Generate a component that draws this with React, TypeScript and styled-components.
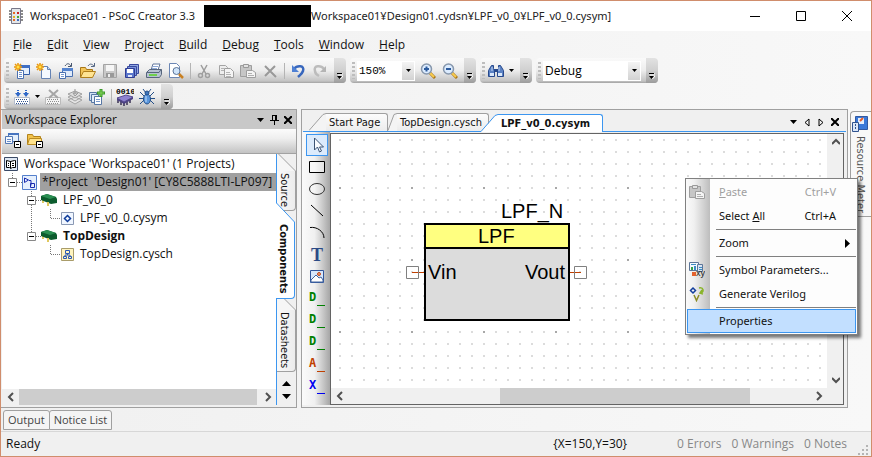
import React from "react";
import styled, { createGlobalStyle, css } from "styled-components";

const ui = '"Open Sans", "Noto Sans", sans-serif';
const compact = '11px/18px "Noto Sans", "Open Sans", sans-serif';
const tahoma = '"DejaVu Sans Condensed", "DejaVu Sans", sans-serif';
const blue = "#3c96f0";
const edge = "#a0a0a0";

const Global = createGlobalStyle`
  * { box-sizing: border-box; }
  body { margin: 0; overflow: hidden; font: 12px/18px ${ui}; color: #111; }
  button { border: 0; padding: 0; margin: 0; background: none; font: inherit; color: inherit; }
  svg { display: block; flex: none; }
  ul { list-style: none; margin: 0; padding: 0; }
  h1, h2 { font: inherit; margin: 0; }
`;

const Window = styled.div`
  position: relative;
  display: flex;
  flex-direction: column;
  min-height: 100vh;
  border: 1px solid #d08d6c;
  background: linear-gradient(90deg, #f0f0f0, #f8f8f8);
`;

/* ---------- title and menu ---------- */
const TitleBar = styled.header`
  display: flex;
  align-items: center;
  height: 30px;
  padding: 0 14px 0 7px;
  background: #fff;
  color: #222;
`;
const Title = styled.h1`
  display: flex;
  flex: 1;
  align-items: center;
  padding-left: 6px;
  white-space: pre;
  font: ${compact};
`;
const TitleName = styled.span`
  width: 174px;
`;
const Redaction = styled.span`
  width: 107px;
  height: 22px;
  background: #000;
`;
const Caption = styled.div`
  display: flex;
  gap: 26px;
`;
const CaptionButton = styled.button`
  display: grid;
  place-items: center;
  width: 20px;
  height: 20px;
`;
const MenuBar = styled.nav`
  display: flex;
  gap: 15px;
  height: 27px;
  padding: 4px 12px;
`;
const MenuButton = styled.button`
  line-height: 18px;
`;

/* ---------- tool bars ---------- */
const ToolArea = styled.div`
  display: flex;
  flex-wrap: wrap;
  gap: 0 4px;
  padding: 0 3px;
`;
const Break = styled.div`
  flex-basis: 100%;
  height: 1px;
`;
const Strip = styled.div`
  display: flex;
  align-items: center;
  height: 25px;
  padding-left: 2px;
  border-radius: 4px;
  background: linear-gradient(#fafafa, #ededed 50%, #c4c4c4 92%, #a2a2a2);
`;
const Grip = styled.span`
  width: 3px;
  height: 17px;
  margin-right: 2px;
  background: repeating-linear-gradient(#bdbdbd 0 2px, transparent 2px 4px);
`;
const ToolButton = styled.button<{ $w?: number }>`
  display: grid;
  place-items: center;
  width: ${(p) => p.$w ?? 22}px;
  height: 22px;
`;
const Divider = styled.span`
  width: 1px;
  height: 16px;
  margin: 0 2px 0 3px;
  background: #b4b4b4;
`;
const OverflowButton = styled.button`
  display: grid;
  place-items: end center;
  width: 12px;
  height: 25px;
  padding-bottom: 3px;
  margin-left: 3px;
  border-radius: 0 4px 4px 0;
  background: linear-gradient(#e2e2e2, #d0d0d0 50%, #9c9c9c);
`;
const Combo = styled.label<{ $w: number }>`
  display: grid;
  width: ${(p) => p.$w}px;
  height: 20px;
  margin-right: 2px;
  background: #fff;
`;
const Select = styled.select<{ $mono?: boolean }>`
  grid-area: 1 / 1;
  appearance: none;
  border: 0;
  padding: 0 14px 0 2px;
  background: transparent;
  color: #000;
  font: ${(p) => (p.$mono ? '11px "Liberation Mono", monospace' : `12px ${ui}`)};
`;
const ComboArrow = styled.span`
  grid-area: 1 / 1;
  justify-self: end;
  display: grid;
  place-items: center;
  width: 12px;
  margin: 1px;
  background: linear-gradient(#f4f4f4, #d2d2d2);
  pointer-events: none;
`;

/* ---------- work area ---------- */
const Work = styled.main`
  display: flex;
  flex: 1;
  min-height: 0;
  gap: 4px;
`;
const Explorer = styled.section`
  display: flex;
  flex-direction: column;
  width: 296px;
  border: solid ${edge};
  border-width: 1px 1px 1px 0;
  padding-left: 1px;
  background: #f0f0f0;
`;
const PanelTitle = styled.div`
  display: flex;
  align-items: center;
  height: 19px;
  padding: 0 1px 0 3px;
  background: #c8c8c8;
`;
const PanelName = styled.h2`
  flex: 1;
`;
const PanelButton = styled.button`
  display: grid;
  place-items: center;
  width: 14px;
  height: 18px;
`;
const PanelTools = styled.div`
  display: flex;
  height: 25px;
  background: linear-gradient(#fcfcfc, #eee 40%, #c3c3c3);
  border-bottom: 1px solid #a2a2a2;
`;
const ExplorerBody = styled.div`
  display: flex;
  flex: 1;
  padding-bottom: 2px;
`;
const TreePane = styled.div`
  display: flex;
  flex: 1;
  flex-direction: column;
  min-width: 0;
  background: #fff;
`;
const Tree = styled.ul`
  flex: 1;
  padding-top: 1px;
`;
const TreeRow = styled.li`
  display: flex;
  align-items: center;
  height: 18px;
  white-space: pre;
`;
const TreeLabel = styled.span<{ $bold?: boolean; $selected?: boolean }>`
  padding-left: 6px;
  font-weight: ${(p) => (p.$bold ? 700 : 400)};
  ${(p) =>
    p.$selected &&
    css`
      flex: 1;
      height: 18px;
      margin-left: 3px;
      padding-left: 2px;
      background: #a0a0a0;
    `}
`;
const Expander = styled.button`
  width: 9px;
  height: 18px;
`;

/* ---------- scroll bars ---------- */
const ScrollBar = styled.div<{ $vertical?: boolean }>`
  display: flex;
  flex-direction: ${(p) => (p.$vertical ? "column" : "row")};
  justify-content: space-between;
  align-items: stretch;
  ${(p) => (p.$vertical ? "width" : "height")}: 16px;
  background: #f0f0f0;
`;
const ScrollArrow = styled.button`
  display: grid;
  place-items: center;
  flex: none;
  width: 17px;
  height: 16px;
`;
const Track = styled.div<{ $start: number; $size: number }>`
  display: grid;
  grid-template-columns: ${(p) => p.$start}fr ${(p) => p.$size}fr ${(p) => 100 - p.$start - p.$size}fr;
  flex: 1;
`;
const Thumb = styled.div`
  grid-column: 2;
  background: #cdcdcd;
`;

/* ---------- vertical tabs ---------- */
const SideTabs = styled.div`
  display: flex;
  flex-direction: column;
  width: 20px;
  border-left: 1px solid ${blue};
`;
const SideTab = styled.button<{ $active?: boolean }>`
  position: relative;
  z-index: ${(p) => (p.$active ? 1 : 0)};
  display: flex;
  flex-direction: column;
  width: 19px;
  margin: ${(p) => (p.$active ? "-8px 0 0 -1px" : "0")};
  font: 11px/16px ${tahoma};
  font-weight: ${(p) => (p.$active ? 700 : 400)};
`;
const SideTabBody = styled.span<{ $active?: boolean; $h: number }>`
  width: 19px;
  height: ${(p) => p.$h}px;
  padding: 2px 3px 0 0;
  writing-mode: vertical-rl;
  line-height: 15px;
  text-align: left;
  border: solid ${(p) => (p.$active ? blue : edge)};
  border-width: 0 1px 1px 0;
  border-radius: 0 0 4px 0;
  background: ${(p) => (p.$active ? "#fff" : "linear-gradient(90deg, #fafafa, #ececec)")};
`;
const TabScroll = styled.div`
  display: flex;
  flex: 1;
  flex-direction: column;
  align-items: center;
  justify-content: flex-end;
  padding-bottom: 2px;
`;
const StepButton = styled.button`
  display: grid;
  place-items: center;
  width: 14px;
  height: 13px;
`;

/* ---------- documents ---------- */
const Documents = styled.section`
  display: flex;
  flex: 1;
  flex-direction: column;
  min-width: 0;
  border: 1px solid ${edge};
  background: #f0f0f0;
`;
const TabBar = styled.div`
  display: flex;
  align-items: flex-end;
  height: 22px;
  margin: 0 1px;
  padding: 0 4px 0 6px;
  border-bottom: 1px solid ${blue};
`;
const DocTab = styled.button<{ $active?: boolean; $w: number }>`
  position: relative;
  display: flex;
  width: ${(p) => p.$w}px;
  height: 18px;
  margin: ${(p) => (p.$active ? "0 0 -1px -8px" : "0")};
  font: 11px/17px ${tahoma};
  font-weight: ${(p) => (p.$active ? 700 : 400)};
  white-space: nowrap;
`;
const DocTabBody = styled.span<{ $active?: boolean }>`
  flex: 1;
  align-self: stretch;
  padding-left: 3px;
  text-align: left;
  border: solid ${(p) => (p.$active ? blue : edge)};
  border-width: 1px 1px 0 0;
  border-radius: 0 3px 0 0;
  background: ${(p) => (p.$active ? "#fff" : "linear-gradient(#fcfcfc, #ececec)")};
`;
const Spacer = styled.span`
  flex: 1;
`;
const Editor = styled.div`
  display: flex;
  flex: 1;
  padding: 0 3px 2px 0;
`;
const Toolbox = styled.div`
  display: flex;
  flex-direction: column;
  align-items: flex-end;
  width: 28px;
  padding: 2px 2px 0 0;
  background: linear-gradient(90deg, #fafafa, #f0f0f0 45%, #a6a6a6);
`;
const ToolboxButton = styled.button<{ $on?: boolean }>`
  display: grid;
  place-items: center;
  width: 22px;
  height: 22px;
  outline: ${(p) => (p.$on ? `1px solid ${blue}` : "0")};
  outline-offset: -1px;
  background: ${(p) => (p.$on ? "#dcebfc" : "none")};
`;
const CanvasFrame = styled.div`
  display: grid;
  grid-template: minmax(0, 1fr) 16px / minmax(0, 1fr) 16px;
  flex: 1;
  min-width: 0;
  margin-top: 1px;
  border: solid #646464;
  border-width: 1px;
  background: #f0f0f0;
`;
const Canvas = styled.svg`
  width: 100%;
  height: 100%;
  background: #fff;
  font: 20px "Liberation Sans", Arial, sans-serif;
`;

/* ---------- right rail ---------- */
const Rail = styled.aside`
  width: 19px;
  padding-top: 2px;
`;
const RailTab = styled.button`
  display: flex;
  flex-direction: column;
  align-items: center;
  gap: 4px;
  width: 21px;
  margin-left: -2px;
  height: 106px;
  padding: 4px 3px 0 0;
  border: solid ${edge};
  border-width: 1px 0 1px 1px;
  border-radius: 4px 0 0 4px;
  font: 11px/16px ${tahoma};
  color: #555;
`;
const Vertical = styled.span`
  writing-mode: vertical-rl;
  white-space: nowrap;
`;

/* ---------- bottom ---------- */
const BottomTabs = styled.div`
  display: flex;
  height: 23px;
  padding: 2px 2px 0;
`;
const BottomTab = styled.button`
  height: 20px;
  padding: 0 4px;
  margin-right: -1px;
  border: 1px solid ${edge};
  border-radius: 3px 3px 0 0;
  background: #f4f4f4;
  color: #444;
  font: 11px/18px ${ui};
`;
const StatusBar = styled.footer`
  display: flex;
  align-items: center;
  height: 25px;
  padding-left: 5px;
  border-top: 1px solid #d7d7d7;
  background: #f0f0f0;
`;
const StatusCount = styled.span`
  margin-right: 10px;
  color: #888;
`;
const Position = styled.span`
  margin-right: 50px;
`;

/* ---------- context menu ---------- */
const ContextMenu = styled.div`
  position: absolute;
  z-index: 5;
  top: 177px;
  right: 13px;
  width: 173px;
  padding: 1px;
  border: 1px solid #808080;
  background: linear-gradient(90deg, #fafafa, #f0f0f0 8px, #bdbdbd 24px, #fdfdfd 24px);
  box-shadow: 3px 3px 3px #0008;
  font: ${compact};
`;
const ContextItem = styled.button<{ $selected?: boolean; $disabled?: boolean; $submenu?: boolean }>`
  display: flex;
  align-items: center;
  width: 100%;
  height: 24px;
  padding: 0 ${(p) => (p.$submenu ? 6 : 20)}px 0 2px;
  color: ${(p) => (p.$disabled ? "#a0a0a0" : "#111")};
  ${(p) =>
    p.$selected &&
    css`
      background: #c2dfff;
      box-shadow: inset 0 0 0 1px ${blue};
    `}
`;
const IconSlot = styled.span`
  flex: none;
  width: 30px;
`;
const ItemLabel = styled.span`
  flex: 1;
  text-align: left;
  white-space: nowrap;
`;
const Separator = styled.hr`
  height: 1px;
  margin: 1px 0 1px 29px;
  border: 0;
  background: #808080;
`;

/* ---------- icons ---------- */
const Svg = ({ w = 16, h = 16, children }: { w?: number; h?: number; children?: React.ReactNode }) => (
  <svg width={w} height={h} viewBox={`0 0 ${w} ${h}`} fill="none" aria-hidden="true">
    {children}
  </svg>
);
const Down = ({ color = "#000" }: { color?: string }) => (
  <Svg w={7} h={4}><path d="M0 0h7L3.5 4z" fill={color} /></Svg>
);
const SmallDown = () => (
  <Svg w={5} h={3}><path d="M0 0h5L2.500 3z" fill="#000" /></Svg>
);
const More = () => (
  <Svg w={6} h={7}><path d="M1 1h5M1 3h5l-2.500 3z" stroke="#fff" /><path d="M0 0h5v1H0zM0 3h5L2.500 6z" fill="#000" /></Svg>
);
const Star = () => (
  <g>
    <path d="M4 0v8M0 4h8M1 1l6 6M7 1L1 7" stroke="#e8960c" strokeWidth="1.500" />
    <circle cx="4" cy="4" r="2" fill="#ffe04a" stroke="#f0a010" />
  </g>
);
const NewProject = () => (
  <Svg>
    <path d="M5.500 3.500h10v8h-10z" fill="#e4effc" stroke="#2f5aa8" /><path d="M5 2h11v3H5z" fill="#3f6fc4" />
    <path d="M3.500 7.500h6v8h-6z" fill="#fff" stroke="#4a70b0" /><path d="M5 9.500h3M5 11.500h3M5 13.500h3" stroke="#6f92cc" /><Star />
  </Svg>
);
const NewFile = () => (
  <Svg><path d="M5.500 3.500h6l3 3v9h-9z" fill="#f4f9ff" stroke="#6583b4" /><path d="M11.500 3.500v3h3" fill="#c7daf4" stroke="#6583b4" /><Star /></Svg>
);
const AddItem = () => (
  <Svg>
    <path d="M4.500 6.500h10v7h-10z" fill="#dfeafa" stroke="#4a70b0" /><path d="M4 5h11v3H4z" fill="#5584cf" />
    <path d="M1.500 9.500h6v6h-6z" fill="#fff" stroke="#4a70b0" /><path d="M3 11.500h3M3 13.500h3" stroke="#7899ce" />
    <path d="M7 3c2-3 4-3 6 0M13.500 0v3.500H10" stroke="#47566e" />
  </Svg>
);
const Open = () => (
  <Svg>
    <path d="M.5 14V4.500h5l1 2h6V9" fill="#f4c659" stroke="#a87718" /><path d="M.5 14.500l3-6h12l-3 6z" fill="#ffe493" stroke="#b07f1d" />
    <path d="M8 3c2-3 4-2 6 0M14.500 0v3.500H11" stroke="#566886" />
  </Svg>
);
const Save = () => (
  <Svg><path d="M1.500 1.500h13v13h-13z" fill="#c9c9c9" stroke="#a4a4a4" /><path d="M4 2h8v6H4z" fill="#f6f6f6" /><path d="M4 10h8v4H4z" fill="#999" /><path d="M6 11h2v3H6z" fill="#eee" /></Svg>
);
const SaveAll = () => (
  <Svg>
    <path d="M5.500 1.500h9v9h-9z" fill="#8fa6e0" stroke="#39489e" /><path d="M3.500 3.500h9v9h-9z" fill="#7894dc" stroke="#39489e" />
    <path d="M1.500 5.500h9v9h-9z" fill="#5a76cc" stroke="#303c92" /><path d="M3 6h6v4H3z" fill="#fff" /><path d="M4 12h4v2H4z" fill="#dfe6fa" />
  </Svg>
);
const Print = () => (
  <Svg>
    <path d="M5 7l2-6h7l-2 6z" fill="#fff" stroke="#61769c" /><path d="M7 3.500h5M6 5.500h5" stroke="#8da8d8" />
    <path d="M.5 9.500l3-3h12v5l-2 3H.5z" fill="#b7c2d2" stroke="#56657c" /><path d="M1 9.500h12l2-3" stroke="#56657c" /><path d="M3 11h8v2H3z" fill="#6fd04c" />
  </Svg>
);
const Preview = () => (
  <Svg><path d="M1.500.5h7l3 3v11h-10z" fill="#fff" stroke="#6b86b4" /><circle cx="8.500" cy="8" r="3.500" fill="#cfe4fa" stroke="#5c7497" /><path d="M11 11l4 4" stroke="#c98022" strokeWidth="2.500" /></Svg>
);
const Cut = () => (
  <Svg><path d="M5 2l5 9M11 2L6 11" stroke="#9c9c9c" strokeWidth="1.500" /><circle cx="4.500" cy="12.500" r="2" stroke="#a0a0a0" strokeWidth="1.500" /><circle cx="11.500" cy="12.500" r="2" stroke="#a0a0a0" strokeWidth="1.500" /></Svg>
);
const Copy = () => (
  <Svg><path d="M1.500 2.500h6l2 2v7h-8z" fill="#eee" stroke="#a4a4a4" /><path d="M6.500 5.500h6l3 3v6h-9z" fill="#f4f4f4" stroke="#a0a0a0" /><path d="M3 5.500h3M3 7.500h3M8 9.500h4M8 11.500h5M8 13.500h5" stroke="#b4b4b4" /></Svg>
);
const Paste = () => (
  <Svg><path d="M.5 2.500h11v11H.5z" fill="#c6c6c6" stroke="#9e9e9e" /><path d="M3.500 1.500h5v3h-5z" fill="#e2e2e2" stroke="#999" /><path d="M6.500 7.500h6l3 2v5h-9z" fill="#f4f4f4" stroke="#9e9e9e" /><path d="M8 10.500h4M8 12.500h6" stroke="#b0b0b0" /></Svg>
);
const Delete = () => (<Svg><path d="M3 3l11 11M13 3L3 13" stroke="#999" strokeWidth="2" /></Svg>);
const Undo = () => (
  <Svg><path d="M4 6c3-4 11-4 9 2-1 3-3 4-5 6" stroke="#3867bd" strokeWidth="2.500" /><path d="M2 2v7h7z" fill="#4e80d4" /></Svg>
);
const Redo = () => (
  <Svg><path d="M12 6C9 2 1 2 3 8c0 2 2 4 4 5" stroke="#bcbcbc" strokeWidth="2.500" /><path d="M14 3v6H8z" fill="#b4b4b4" /></Svg>
);
const Magnifier = ({ plus }: { plus?: boolean }) => (
  <Svg>
    <path d="M10 10l5 5" stroke="#a87418" strokeWidth="3" /><path d="M10 10l4 4" stroke="#f8cc50" strokeWidth="2" />
    <circle cx="6.500" cy="6" r="5" fill="#dcecff" stroke="#8797ac" strokeWidth="1.500" />
    <path d={plus ? "M4 6h5M6.500 3.500v5" : "M4 6h5"} stroke="#2c5b9e" strokeWidth="2" />
  </Svg>
);
const Binoculars = () => (
  <Svg>
    <path d="M3.500 2.500h2v3l1 2v6h-6v-6zM10.500 2.500h2l3 5v6h-6v-6l1-2z" fill="#5b82c4" stroke="#27498c" />
    <path d="M6 6h4v3H6z" fill="#27498c" /><path d="M2 10h4v3H2zM10 10h4v3h-4z" fill="#dbe9fb" /><path d="M4 4v4M11 4v4" stroke="#c3d6f4" />
  </Svg>
);
const Build = () => (
  <Svg>
    <path d="M4 1v5M12 1v5" stroke="#2e67c8" strokeWidth="2" strokeDasharray="1 1" /><path d="M1 4h6L4 8zM9 4h6l-3 4z" fill="#2e67c8" />
    <path d="M.5 8.500h15v7H.5z" fill="#fff" stroke="#b4bccb" /><path d="M2 10.500h12M3 12.500h11M2 14.500h12" stroke="#2f5290" strokeDasharray="1 1" />
  </Svg>
);
const CleanBuild = () => (
  <Svg><path d="M.5 8.500h15v7H.5z" fill="#f4f4f4" stroke="#bbb" /><path d="M2 10.500h12M3 12.500h11M2 14.500h12" stroke="#8e8e8e" strokeDasharray="1 1" /><path d="M4 1l9 8M13 1L4 9" stroke="#a6a6a6" strokeWidth="2" /></Svg>
);
const Generate = () => (
  <Svg><path d="M1 11l7-3 7 3-7 4zM1 8l7-3 7 3-7 4z" fill="#e4e4e4" stroke="#a4a4a4" /><path d="M1 5l7-3 7 3-7 4z" fill="#ddd" stroke="#a0a0a0" /><path d="M8 0v5M6 4h5l-3 3z" stroke="#999" /></Svg>
);
const Pages = () => (
  <Svg>
    <path d="M.5 3.500h7v8h-7z" fill="#d2e1f4" stroke="#5777a4" /><path d="M2.500 5.500h7v8h-7z" fill="#e3edf9" stroke="#5777a4" /><path d="M5.500 7.500h7v8h-7z" fill="#fff" stroke="#5777a4" />
    <path d="M7 10.500h4M7 12.500h4" stroke="#7899ce" /><path d="M12 0v8M8 4h8" stroke="#3d9a2c" strokeWidth="3" /><path d="M12 1v6M9 4h6" stroke="#86d458" />
  </Svg>
);
const Program = () => (
  <Svg w={18} h={18}>
    <path d="M2 11v4M5 13v4M8 14v4M11 14v3M14 12v3" stroke="#383052" strokeWidth="1.500" />
    <path d="M1 10l9-3 7 2-9 5z" fill="#8e82d0" stroke="#5a4f94" /><path d="M1 10l7 4v2l-7-4zM8 14l9-5v2l-9 5z" fill="#4c4284" />
    <text x="0" y="6" fontSize="8" fontWeight="700" fontFamily="Liberation Mono, monospace" fill="#000">0010</text>
  </Svg>
);
const Bug = () => (
  <Svg>
    <path d="M4 0l3 4M12 0L9 4M1 3l4 4M15 3l-4 4M0 9.500h16M1 15l4-4M15 15l-4-4" stroke="#244f88" />
    <ellipse cx="8" cy="10" rx="3.500" ry="5" fill="#5a96dc" stroke="#244f88" /><circle cx="8" cy="4" r="2" fill="#3d75bd" stroke="#244f88" /><path d="M7 7v6" stroke="#c4e0fc" />
  </Svg>
);
const Chip = () => (
  <Svg><path d="M3.500.5h9v15h-9z" fill="#e2e6ea" stroke="#778" /><path d="M1 3h2M1 6h2M1 9h2M1 12h2M13 3h2M13 6h2M13 9h2M13 12h2" stroke="#666" strokeWidth="1.500" /><path d="M5 4h2v2H5zM5 11h2v2H5z" fill="#e46a24" /><path d="M9 4h2v2H9z" fill="#c22" /><path d="M5 8h2v2H5z" fill="#e8b020" /><path d="M9 8h2v2H9z" fill="#49a63a" /><path d="M9 11h2v2H9z" fill="#3b69c0" /></Svg>
);
const CollapseBox = () => (<g><path d="M9.500 9.500h6v6h-6z" fill="#fff" stroke="#000" /><path d="M11 12.500h3" stroke="#000" /></g>);
const CollapseAll = () => (
  <Svg><path d="M3.500 1.500h10v8h-10z" fill="#e4effc" stroke="#5478b4" /><path d="M3 1h11v2H3z" fill="#4674c0" /><path d="M.5 4.500h7v7h-7z" fill="#f4f8fe" stroke="#5478b4" /><path d="M2 7.500h4M2 9.500h4" stroke="#6a8cc8" /><CollapseBox /></Svg>
);
const CollapseFolder = () => (
  <Svg><path d="M.5 12V2.500h5l1 2h7V12z" fill="#f2c34c" stroke="#b2821b" /><path d="M.5 12.500l2-6h12v6z" fill="#ffe38c" stroke="#b98a22" /><CollapseBox /></Svg>
);
const Book = () => (
  <Svg w={14} h={14}><path d="M.5.5h13v13H.5z" fill="#dfe8f4" stroke="#3a4a66" /><path d="M2.500 3.500l4 1 4-1h1v7h-3l-2 1-1-1h-3z" fill="#fff" stroke="#000" /><path d="M6.500 4v7M4 6.500h1M4 8.500h1M8 6.500h2M8 8.500h2" stroke="#000" /></Svg>
);
const ProjectIcon = () => (
  <Svg w={15} h={15}><path d="M.5.5h14v14H.5z" fill="#e6f0fd" stroke="#5580cc" /><path d="M2.500 3l4 2-4 2.500zM7 5.500h2v5M8.500 8.500h4v4h-4z" stroke="#1a2cb0" /></Svg>
);
const Component = () => (
  <Svg w={16} h={14}>
    <path d="M2 6v4M7 8v5" stroke="#e0c860" strokeWidth="2" />
    <path d="M0 3l6-2 9 3 1 2v4l-6 1-10-4z" fill="#0d5c2e" /><path d="M0 3l6-2 9 3-6 2z" fill="#2a8f52" /><path d="M2 8v2M7 9v3" stroke="#e0c860" strokeWidth="2" />
  </Svg>
);
const SymbolFile = () => (
  <Svg w={13} h={13}><path d="M.5.5h12v12H.5z" fill="#f0f6ff" stroke="#8a99b4" /><path d="M6.500 3.500l3 3-3 3-3-3z" stroke="#0c3a9a" strokeWidth="1.500" /></Svg>
);
const SchematicFile = () => (
  <Svg w={13} h={13}><path d="M.5.5h12v12H.5z" fill="#fff4be" stroke="#a99c6a" /><path d="M4.500 2.500h4v3h-4zM2.500 8.500h3v2h-3zM7.500 8.500h3v2h-3zM6.500 6v1M4 8V7h5v1" stroke="#2b59b4" /></Svg>
);
const Pin = () => (<Svg w={9} h={10}><path d="M2.500 0v5M6.500 0v5M2 .5h5M0 5.500h9M4.500 6v4" stroke="#000" /><path d="M5 0h1v5H5z" fill="#000" /></Svg>);
const Cross = () => (<Svg w={8} h={8}><path d="M0 0l8 8M8 0L0 8" stroke="#000" strokeWidth="2" /></Svg>);
const chevrons = { left: "M6 1L2 5l4 4", right: "M2 1l4 4-4 4", up: "M0 7l4-4 4 4", down: "M0 3l4 4 4-4" };
const Chevron = ({ to }: { to: keyof typeof chevrons }) => (
  <Svg w={8} h={10}><path d={chevrons[to]} stroke="#505050" strokeWidth="2" /></Svg>
);
const Meter = () => (
  <Svg><path d="M3.500.5h12v13h-12z" fill="#3a78d8" stroke="#3158a0" /><path d="M6 2h6v6H6z" fill="#e4eefb" /><path d="M8 5l3-3" stroke="#e65c28" strokeWidth="2" /><path d="M.5 6.500h6v9h-6z" fill="#dbe7f8" stroke="#31548f" /><path d="M3 9h1M3 12h1" stroke="#31548f" strokeWidth="2" /></Svg>
);
const SymbolParams = () => (
  <Svg><path d="M.5.5h9v8h-9z" fill="#f4f8fd" stroke="#5c7598" /><path d="M8.500 2.500h5v7h-5z" fill="#d9e4f2" stroke="#5c7598" /><path d="M2 2.500h5M10 5.500h3M10 7.500h3" stroke="#3b8cc4" /><path d="M2 5h2v3H2z" fill="#35a046" /><path d="M5 4h2v4H5z" fill="#3b8cc4" /><path d="M3 10h4v4H3z" fill="#e46330" /><text x="7" y="14" fontSize="9" fontFamily="Liberation Sans, sans-serif" fill="#222">xy</text></Svg>
);
const Verilog = () => (
  <Svg><path d="M4 2l2.500 2.500L4 7 1.500 4.500z" stroke="#123e9c" strokeWidth="1.500" /><path d="M10 2c5-1 5 4 2 5M13 4l-2 3 3 1" stroke="#8ab42a" strokeWidth="1.500" /><path d="M5 9l2.500 5.500L10 9" stroke="#8c8c22" strokeWidth="1.500" /></Svg>
);

const Pointer = () => (<Svg w={18} h={18}><path d="M6.500 2v12l3-3 2 5 2-1-2-4h4z" fill="#f8fbff" stroke="#3c5474" /></Svg>);
const RectTool = () => (<Svg w={18} h={18}><path d="M1.500 3.500h15v11h-15z" fill="#fff8" stroke="#000" /></Svg>);
const EllipseTool = () => (<Svg w={18} h={18}><ellipse cx="9" cy="9" rx="7.500" ry="5.500" fill="#fff4" stroke="#333" /></Svg>);
const LineTool = () => (<Svg w={18} h={18}><path d="M3 3l12 11" stroke="#000" /></Svg>);
const ArcTool = () => (<Svg w={18} h={18}><path d="M2 3.500c7-1 14 4 14 10.500" stroke="#000" /></Svg>);
const TextTool = () => (<Svg w={22} h={22}><text x="11" y="17" textAnchor="middle" fontSize="18" fontWeight="700" fontFamily="Liberation Serif, serif" fill="#2b4a86">T</text></Svg>);
const ImageTool = () => (<Svg w={18} h={18}><path d="M2.500 2.500h13v12h-13z" fill="#d7e7fb" stroke="#31569c" /><path d="M3 14v-2l5-5 3 3 2-1 2 3v2z" fill="#fff" stroke="#42659f" /><circle cx="11" cy="6" r="1.500" fill="#f0a070" stroke="#c04820" /></Svg>);
const Terminal = ({ letter, color }: { letter: string; color: string }) => (
  <Svg w={18} h={18}><text x="1" y="11" fontSize="12" fontWeight="700" fontFamily="DejaVu Sans Mono, monospace" fill={color}>{letter}</text><path d="M9 15.500h8" stroke={color} /></Svg>
);

/* ---------- pieces ---------- */
const mnemonic = (text: string, at = 0) => (
  <>{text.slice(0, at)}<u>{text[at]}</u>{text.slice(at + 1)}</>
);
const Tool = ({ name, children, w }: { name: string; children: React.ReactNode; w?: number }) => (
  <ToolButton type="button" aria-label={name} title={name} $w={w}>{children}</ToolButton>
);
const Overflow = () => (<OverflowButton type="button" aria-label="Toolbar options"><More /></OverflowButton>);

const HScroll = ({ start, size }: { start: number; size: number }) => (
  <ScrollBar>
    <ScrollArrow type="button" aria-label="Scroll left"><Chevron to="left" /></ScrollArrow>
    <Track $start={start} $size={size}><Thumb /></Track>
    <ScrollArrow type="button" aria-label="Scroll right"><Chevron to="right" /></ScrollArrow>
  </ScrollBar>
);
const Toggle = ({ up, down, name }: { up?: boolean; down?: boolean; name: string }) => (
  <Expander type="button" aria-label={`Collapse ${name}`}>
    <Svg w={9} h={18}>
      {up && <path d="M4.500 0v5" stroke="#777" strokeDasharray="1 1" />}
      {down && <path d="M4.500 14v4" stroke="#777" strokeDasharray="1 1" />}
      <path d="M.5 5.500h8v8h-8z" fill="#fff" stroke="#888" /><path d="M2 9.500h5" stroke="#000" />
    </Svg>
  </Expander>
);
const Guide = ({ w, d }: { w: number; d?: string }) => (
  <Svg w={w} h={18}>{d && <path d={d} stroke="#777" strokeDasharray="1 1" />}</Svg>
);
const VTab = ({ label, h, active, slant = 17 }: { label: string; h: number; active?: boolean; slant?: number }) => (
  <SideTab type="button" $active={active}>
    <Svg w={19} h={slant}>
      <path d={`M${active ? 0.5 : 18.5 - slant} 0L18.500 ${slant}H0V0z`} fill={active ? "#fff" : "#f6f6f6"} />
      <path d={`M${active ? 0.5 : 18.5 - slant} 0L18.500 ${slant}`} stroke={active ? blue : edge} />
    </Svg>
    <SideTabBody $active={active} $h={h}>{label}</SideTabBody>
  </SideTab>
);
const DTab = ({ label, w, active, slant = 18 }: { label: string; w: number; active?: boolean; slant?: number }) => (
  <DocTab type="button" $active={active} $w={w}>
    <Svg w={slant} h={18}>
      <path d={`M0 17.500L${slant - 2} 1.500L${slant} .5V18H0z`} fill={active ? "#fff" : "#f4f4f4"} />
      <path d={`M0 17.500L${slant - 3} 1.500L${slant} .5`} stroke={active ? blue : edge} />
    </Svg>
    <DocTabBody $active={active}>{label}</DocTabBody>
  </DocTab>
);

const menus = ["File", "Edit", "View", "Project", "Build", "Debug", "Tools", "Window", "Help"];

const Drawing = () => (
  <Canvas role="img" aria-label="Low pass filter symbol">
    <defs>
      <pattern id="grid" x="8" y="5" width="12" height="12" patternUnits="userSpaceOnUse"><rect width="2" height="2" fill="#dcdcdc" /></pattern>
      <pattern id="major" x="8" y="53" width="72" height="72" patternUnits="userSpaceOnUse"><rect width="2" height="2" fill="#a8a8a8" /></pattern>
    </defs>
    <rect width="100%" height="100%" fill="url(#grid)" />
    <rect width="100%" height="100%" fill="url(#major)" />
    <g stroke="#000" strokeWidth="2">
      <rect x="94" y="90" width="144" height="96" fill="#dcdcdc" />
      <rect x="94" y="90" width="144" height="24" fill="#ffff80" />
    </g>
    <path d="M81 138.500h12M239 138.500h11" stroke="#c04000" />
    <path d="M75.500 132.500h12v12h-12zM243.500 132.500h12v12h-12z" fill="none" stroke="#808080" />
    <text x="170" y="84">LPF_N</text>
    <text x="147" y="109">LPF</text>
    <text x="97" y="145">Vin</text>
    <text x="234" y="145" textAnchor="end">Vout</text>
  </Canvas>
);

export default function App() {
  return (
    <Window>
      <Global />
      <TitleBar>
        <Chip />
        <Title><TitleName>Workspace01 - PSoC Creator 3.3</TitleName><Redaction />Workspace01¥Design01.cydsn¥LPF_v0_0¥LPF_v0_0.cysym]</Title>
        <Caption>
          <CaptionButton type="button" aria-label="Minimize"><Svg w={10} h={10}><path d="M0 5.500h10" stroke="#000" /></Svg></CaptionButton>
          <CaptionButton type="button" aria-label="Maximize"><Svg w={10} h={10}><path d="M.5.5h9v9h-9z" stroke="#000" /></Svg></CaptionButton>
          <CaptionButton type="button" aria-label="Close"><Svg w={10} h={10}><path d="M0 0l10 10M10 0L0 10" stroke="#000" /></Svg></CaptionButton>
        </Caption>
      </TitleBar>
      <MenuBar>
        {menus.map((m) => <MenuButton type="button" key={m}>{mnemonic(m)}</MenuButton>)}
      </MenuBar>

      <ToolArea>
        <Strip>
          <Grip />
          <Tool name="New project"><NewProject /></Tool>
          <Tool name="New file"><NewFile /></Tool>
          <Tool name="Add item"><AddItem /></Tool>
          <Tool name="Open"><Open /></Tool>
          <Tool name="Save"><Save /></Tool>
          <Tool name="Save all"><SaveAll /></Tool>
          <Tool name="Print"><Print /></Tool>
          <Tool name="Print preview"><Preview /></Tool>
          <Divider />
          <Tool name="Cut"><Cut /></Tool>
          <Tool name="Copy"><Copy /></Tool>
          <Tool name="Paste"><Paste /></Tool>
          <Tool name="Delete"><Delete /></Tool>
          <Divider />
          <Tool name="Undo"><Undo /></Tool>
          <Tool name="Redo"><Redo /></Tool>
          <Overflow />
        </Strip>
        <Strip>
          <Grip />
          <Combo $w={58}>
            <Select $mono aria-label="Zoom level"><option>150%</option></Select>
            <ComboArrow><SmallDown /></ComboArrow>
          </Combo>
          <Tool name="Zoom in"><Magnifier plus /></Tool>
          <Tool name="Zoom out"><Magnifier /></Tool>
          <Overflow />
        </Strip>
        <Strip>
          <Grip />
          <Tool name="Find" w={18}><Binoculars /></Tool>
          <Tool name="Find options" w={12}><SmallDown /></Tool>
          <Overflow />
        </Strip>
        <Strip>
          <Grip />
          <Combo $w={98}>
            <Select aria-label="Configuration"><option>Debug</option></Select>
            <ComboArrow><SmallDown /></ComboArrow>
          </Combo>
          <Overflow />
        </Strip>
        <Break />
        <Strip>
          <Grip />
          <Tool name="Build"><Build /></Tool>
          <Tool name="Build options" w={9}><SmallDown /></Tool>
          <Tool name="Clean"><CleanBuild /></Tool>
          <Tool name="Generate application"><Generate /></Tool>
          <Tool name="Add component"><Pages /></Tool>
          <Divider />
          <Tool name="Program"><Program /></Tool>
          <Tool name="Debug"><Bug /></Tool>
          <Overflow />
        </Strip>
      </ToolArea>

      <Work>
        <Explorer>
          <PanelTitle>
            <PanelName>Workspace Explorer</PanelName>
            <PanelButton type="button" aria-label="Window position"><Down /></PanelButton>
            <PanelButton type="button" aria-label="Auto hide"><Pin /></PanelButton>
            <PanelButton type="button" aria-label="Close panel"><Cross /></PanelButton>
          </PanelTitle>
          <PanelTools>
            <Tool name="Collapse projects"><CollapseAll /></Tool>
            <Tool name="Collapse folders"><CollapseFolder /></Tool>
          </PanelTools>
          <ExplorerBody>
            <TreePane>
              <Tree>
                <TreeRow><Guide w={2} /><Book /><TreeLabel>Workspace 'Workspace01' (1 Projects)</TreeLabel></TreeRow>
                <TreeRow><Guide w={6} /><Toggle up name="Design01" /><Guide w={5} d="M0 9.500h5" /><ProjectIcon /><TreeLabel $selected>*Project  'Design01' [CY8C5888LTI-LP097]</TreeLabel></TreeRow>
                <TreeRow><Guide w={25} /><Toggle up down name="LPF_v0_0" /><Guide w={5} d="M0 9.500h5" /><Component /><TreeLabel>LPF_v0_0</TreeLabel></TreeRow>
                <TreeRow><Guide w={59} d="M29.500 0v18M48.500 0v9.500h10" /><SymbolFile /><TreeLabel>LPF_v0_0.cysym</TreeLabel></TreeRow>
                <TreeRow><Guide w={25} /><Toggle up name="TopDesign" /><Guide w={5} d="M0 9.500h5" /><Component /><TreeLabel $bold>TopDesign</TreeLabel></TreeRow>
                <TreeRow><Guide w={59} d="M48.500 0v9.500h10" /><SchematicFile /><TreeLabel>TopDesign.cysch</TreeLabel></TreeRow>
              </Tree>
              <HScroll start={0} size={99} />
            </TreePane>
            <SideTabs>
              <VTab label="Source" h={40} />
              <VTab label="Components" h={77} active slant={19} />
              <VTab label="Datasheets" h={62} slant={11} />
              <TabScroll>
                <StepButton type="button" aria-label="Previous tab"><Svg w={9} h={5}><path d="M0 5l4.500-5L9 5z" fill="#000" /></Svg></StepButton>
                <StepButton type="button" aria-label="Next tab"><Svg w={9} h={5}><path d="M0 0h9L4.500 5z" fill="#000" /></Svg></StepButton>
              </TabScroll>
            </SideTabs>
          </ExplorerBody>
        </Explorer>

        <Documents>
          <TabBar>
            <DTab label="Start Page" w={79} slant={17} />
            <DTab label="TopDesign.cysch" w={101} slant={9} />
            <DTab label="LPF_v0_0.cysym" w={122} active slant={17} />
            <Spacer />
            <PanelButton type="button" aria-label="Open documents"><Down /></PanelButton>
            <PanelButton type="button" aria-label="Previous document"><Svg w={6} h={9}><path d="M5 1v7L1 4.500z" stroke="#000" /></Svg></PanelButton>
            <PanelButton type="button" aria-label="Next document"><Svg w={6} h={9}><path d="M1 1v7l4-3.500z" stroke="#000" /></Svg></PanelButton>
            <PanelButton type="button" aria-label="Close document"><Cross /></PanelButton>
          </TabBar>
          <Editor>
            <Toolbox>
              <ToolboxButton type="button" aria-label="Select" $on><Pointer /></ToolboxButton>
              <ToolboxButton type="button" aria-label="Rectangle"><RectTool /></ToolboxButton>
              <ToolboxButton type="button" aria-label="Ellipse"><EllipseTool /></ToolboxButton>
              <ToolboxButton type="button" aria-label="Line"><LineTool /></ToolboxButton>
              <ToolboxButton type="button" aria-label="Arc"><ArcTool /></ToolboxButton>
              <ToolboxButton type="button" aria-label="Text"><TextTool /></ToolboxButton>
              <ToolboxButton type="button" aria-label="Image"><ImageTool /></ToolboxButton>
              <ToolboxButton type="button" aria-label="Digital input"><Terminal letter="D" color="#008000" /></ToolboxButton>
              <ToolboxButton type="button" aria-label="Digital output"><Terminal letter="D" color="#008000" /></ToolboxButton>
              <ToolboxButton type="button" aria-label="Digital inout"><Terminal letter="D" color="#008000" /></ToolboxButton>
              <ToolboxButton type="button" aria-label="Analog terminal"><Terminal letter="A" color="#c04000" /></ToolboxButton>
              <ToolboxButton type="button" aria-label="External terminal"><Terminal letter="X" color="#0000f0" /></ToolboxButton>
            </Toolbox>
            <CanvasFrame>
              <Drawing />
              <ScrollBar $vertical>
                <ScrollArrow type="button" aria-label="Scroll up"><Chevron to="up" /></ScrollArrow>
                <ScrollArrow type="button" aria-label="Scroll down"><Chevron to="down" /></ScrollArrow>
              </ScrollBar>
              <HScroll start={33} size={54} />
            </CanvasFrame>
          </Editor>
        </Documents>

        <Rail>
          <RailTab type="button"><Meter /><Vertical>Resource Meter</Vertical></RailTab>
        </Rail>
      </Work>

      <BottomTabs>
        <BottomTab type="button">Output</BottomTab>
        <BottomTab type="button">Notice List</BottomTab>
      </BottomTabs>
      <StatusBar>
        <span>Ready</span>
        <Spacer />
        <Position>{"{X=150,Y=30}"}</Position>
        <StatusCount>0 Errors</StatusCount>
        <StatusCount>0 Warnings</StatusCount>
        <StatusCount>0 Notes</StatusCount>
        <Svg w={14} h={22}><path d="M9 12h2v2H9zM5 16h2v2H5zM9 16h2v2H9zM1 20h2v2H1zM5 20h2v2H5zM9 20h2v2H9z" fill="#b4b4b4" /></Svg>
      </StatusBar>

      <ContextMenu role="menu">
        <ContextItem role="menuitem" aria-disabled="true" $disabled><IconSlot><Paste /></IconSlot><ItemLabel>{mnemonic("Paste")}</ItemLabel><span>Ctrl+V</span></ContextItem>
        <ContextItem role="menuitem"><IconSlot /><ItemLabel>{mnemonic("Select All", 7)}</ItemLabel><span>Ctrl+A</span></ContextItem>
        <Separator />
        <ContextItem role="menuitem" $submenu><IconSlot /><ItemLabel>Zoom</ItemLabel><Svg w={5} h={9}><path d="M0 0l5 4.500L0 9z" fill="#000" /></Svg></ContextItem>
        <Separator />
        <ContextItem role="menuitem"><IconSlot><SymbolParams /></IconSlot><ItemLabel>Symbol Parameters...</ItemLabel></ContextItem>
        <ContextItem role="menuitem"><IconSlot><Verilog /></IconSlot><ItemLabel>Generate Verilog</ItemLabel></ContextItem>
        <Separator />
        <ContextItem role="menuitem" $selected><IconSlot /><ItemLabel>Properties</ItemLabel></ContextItem>
      </ContextMenu>
    </Window>
  );
}
